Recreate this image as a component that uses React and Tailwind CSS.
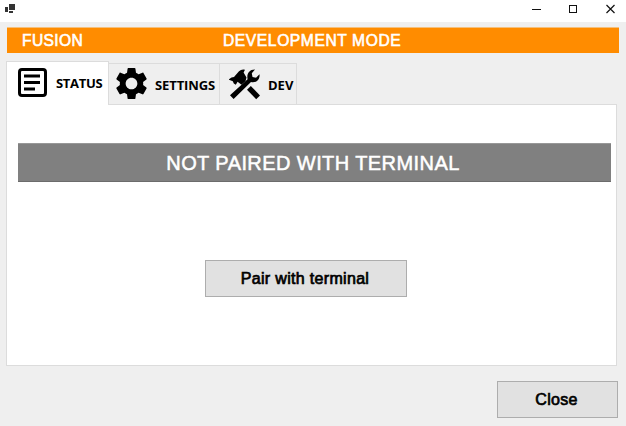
const ui = "font-['Liberation_Sans',Arial,sans-serif]";

function StatusIcon() {
  return (
    <svg width="30" height="30" viewBox="0 0 30 30" fill="none" stroke="#000">
      <rect x="1.5" y="1.5" width="26" height="26" rx="2.5" strokeWidth="3" />
      <path d="M6 8h16M6 14.5h16M6 21h11" strokeWidth="3" />
    </svg>
  );
}

function GearIcon() {
  return (
    <svg width="39" height="39" viewBox="0 0 24 24" fill="#000">
      <path d="M19.14 12.94c.04-.3.06-.61.06-.94 0-.32-.02-.64-.07-.94l2.03-1.58c.18-.14.23-.41.12-.61l-1.92-3.32c-.12-.22-.37-.29-.59-.22l-2.39.96c-.5-.38-1.03-.7-1.62-.94L14.4 2.81c-.04-.24-.24-.41-.48-.41h-3.84c-.24 0-.43.17-.47.41l-.36 2.54c-.59.24-1.13.57-1.62.94l-2.39-.96c-.22-.08-.47 0-.59.22L2.74 8.87c-.12.21-.08.47.12.61l2.03 1.58c-.05.3-.09.63-.09.94s.02.64.07.94l-2.03 1.58c-.18.14-.23.41-.12.61l1.92 3.32c.12.22.37.29.59.22l2.39-.96c.5.38 1.03.7 1.62.94l.36 2.54c.05.24.24.41.48.41h3.84c.24 0 .44-.17.47-.41l.36-2.54c.59-.24 1.13-.56 1.62-.94l2.39.96c.22.08.47 0 .59-.22l1.92-3.32c.12-.22.07-.47-.12-.61l-2.01-1.58zM12 15.6c-1.98 0-3.6-1.62-3.6-3.6s1.62-3.6 3.6-3.6 3.6 1.62 3.6 3.6-1.62 3.6-3.6 3.6z" />
    </svg>
  );
}

function ToolsIcon() {
  return (
    <svg width="32" height="31" viewBox="0 0 32 31" fill="#000">
      <path d="M-.5 10.5 2.5 8.6 5 8 10 2.2Q12.5 0 16 .8L14.6 3.6 17.5 8.5 16.5 12.2 12.5 15.8 8.6 12.8 6.8 15.8 4.8 14.6 3.8 12.2Z" />
      <path d="M1 26.2 18.6 10.2C17.4 5.3 20.3.4 26 .6L22.8 4.2 23.5 8 27 8.7 30.5 5.2C31.3 11 26.5 14.2 22 13L4.6 30Z" />
      <path d="M18 20.8 21.8 17 31 26.4 27.2 30.2Z" />
    </svg>
  );
}

function WindowControls() {
  return (
    <svg className="mr-[5px]" width="92" height="16" viewBox="0 0 92 16" fill="none" stroke="#111" shapeRendering="crispEdges">
      <path d="M3 9.5h9" />
      <rect x="40.5" y="5.5" width="7" height="7" />
      <path d="M77.5 5l8 8M85.5 5l-8 8" shapeRendering="auto" strokeWidth="1.2" />
    </svg>
  );
}

function Tab({ children, label, className, labelClass }) {
  return (
    <button className={`flex shrink-0 border border-[#dcdcdc] text-left ${className}`}>
      {children}
      <span className={`whitespace-nowrap font-['Open_Sans','Noto_Sans',sans-serif] text-[13px] font-bold leading-[18px] text-black ${labelClass}`}>
        {label}
      </span>
    </button>
  );
}

export default function App() {
  return (
    <div className={`flex h-[426px] w-[626px] flex-col overflow-hidden bg-[#efefef] ${ui}`}>
      <header className="flex h-[22px] shrink-0 justify-between bg-white pl-[5px]">
        <svg className="mt-[4px]" width="10" height="9" viewBox="0 0 10 9" fill="#333">
          <path d="M4 0h6v6H4zM0 3h3v5H0zM4 7h4v2H4z" />
        </svg>
        <WindowControls />
      </header>

      <div className="ml-[7px] mt-[5px] flex h-[26px] w-[612px] shrink-0 border-t border-[#f5c07c] bg-[#ff8c00] pl-[15px] text-[15.6px] leading-[25px] text-white [-webkit-text-stroke:0.6px_white]">
        <span className="w-[201px] tracking-[0.35px]">FUSION</span>
        <span className="whitespace-nowrap tracking-[0.6px]">DEVELOPMENT MODE</span>
      </div>

      <nav className="relative z-10 -mb-px ml-[6px] mt-[8px] flex h-[44px] shrink-0 items-end">
        <Tab label="STATUS" className="h-[44px] w-[103px] border-b-0 bg-white pl-[11px] pt-[6px]" labelClass="ml-[8px] mt-[6px] tracking-[-0.3px]">
          <StatusIcon />
        </Tab>
        <Tab label="SETTINGS" className="-ml-px h-[42px] w-[112px] pl-[3px]" labelClass="ml-[4px] mt-[12px] tracking-[-0.1px]">
          <GearIcon />
        </Tab>
        <Tab label="DEV" className="-ml-px h-[42px] w-[78px] pl-[9px]" labelClass="ml-[7px] mt-[12px]">
          <span className="mt-[5px]"><ToolsIcon /></span>
        </Tab>
      </nav>

      <main className="ml-[6px] flex h-[262px] w-[611px] shrink-0 flex-col border border-[#dcdcdc] bg-white pl-[11px] pt-[38px]">
        <div className="flex h-[39px] w-[593px] shrink-0 items-center justify-center border-b border-t border-b-[#6c6c6c] border-t-[#989898] bg-[#808080] pr-[3px] text-[20px] text-white [-webkit-text-stroke:0.5px_white]">
          <span className="whitespace-nowrap tracking-[0.42px]">NOT PAIRED WITH TERMINAL</span>
        </div>
        <button className="ml-[187px] mt-[78px] flex h-[37px] w-[202px] items-center justify-center border border-[#adadad] bg-[#e1e1e1] pr-[2px] text-[16px] text-black [-webkit-text-stroke:0.7px_black]">
          <span className="whitespace-nowrap tracking-[0.32px]">Pair with terminal</span>
        </button>
      </main>

      <button className="ml-[497px] mt-[15px] flex h-[37px] w-[121px] shrink-0 items-center justify-center border border-[#adadad] bg-[#e1e1e1] pr-[2px] text-[16px] tracking-[0.3px] text-black [-webkit-text-stroke:0.7px_black]">
        Close
      </button>
    </div>
  );
}
